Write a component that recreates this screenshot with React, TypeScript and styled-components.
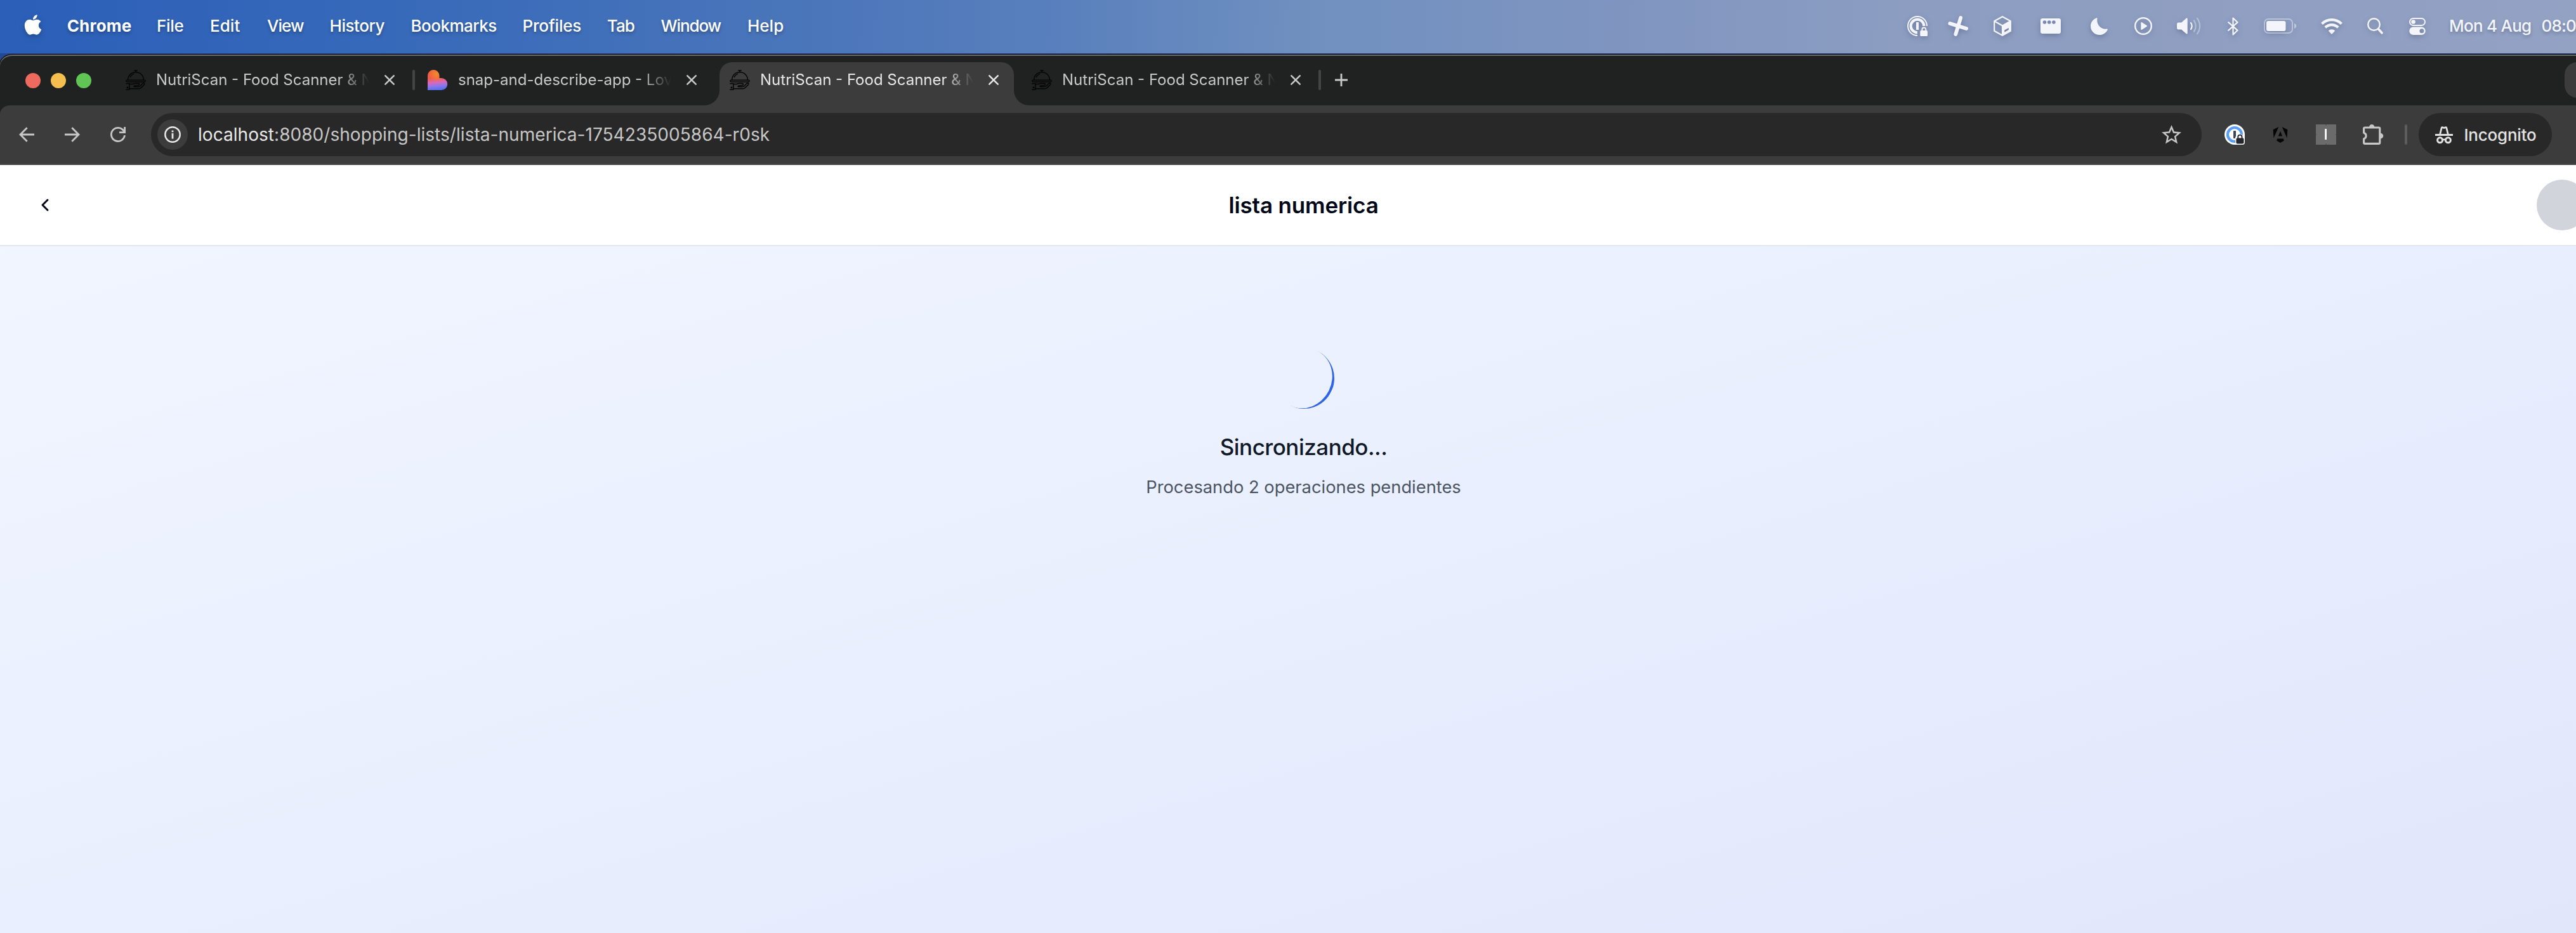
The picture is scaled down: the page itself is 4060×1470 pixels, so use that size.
import React from 'react';
import styled, { createGlobalStyle, css } from 'styled-components';
import { FaApple } from 'react-icons/fa';
import { MdStarBorder } from 'react-icons/md';
import { ChevronLeft } from 'lucide-react';

const GlobalStyle = createGlobalStyle`
  *, *::before, *::after { box-sizing: border-box; }
  body {
    margin: 0;
    font-family: Inter, 'Liberation Sans', sans-serif;
    overflow: hidden;
  }
  svg { display: block; flex: none; overflow: visible; }
`;

const Screen = styled.div`
  width: 4060px;
  height: 1470px;
  overflow: hidden;
  display: flex;
  flex-direction: column;
  background: #234a90;
`;

/* ---------- macOS menu bar ---------- */

const MenuBar = styled.header`
  flex: none;
  display: flex;
  align-items: center;
  height: 84px;
  padding-left: 34px;
  color: #fff;
  background: linear-gradient(
    92deg,
    #2b5fb8 0%,
    #386aba 16%,
    #4b76ba 32%,
    #5980bd 41%,
    #7090bf 51%,
    #7d94c0 61%,
    #8c9dc1 74%,
    #93a1c3 100%
  );
`;

const AppleMark = styled.div`
  width: 71.7px;
  padding-bottom: 6px;
  filter: drop-shadow(0 3px 4px rgba(0, 0, 0, 0.25));
`;

const MenuItem = styled.span<{ $width: number; $tracking?: number; $bold?: boolean }>`
  flex: none;
  width: ${(p) => p.$width}px;
  padding-bottom: 3px;
  font-size: 26px;
  line-height: 32px;
  font-weight: ${(p) => (p.$bold ? 700 : 500)};
  letter-spacing: ${(p) => p.$tracking ?? 0}px;
  white-space: nowrap;
  text-shadow: 0 3px 5px rgba(0, 0, 0, 0.28);
`;

const StatusArea = styled.div`
  flex: none;
  display: flex;
  align-items: center;
  width: 1054px;
  margin-left: auto;
  padding-bottom: 2px;
  color: #f3f5fa;
`;

const StatusIcon = styled.div<{ $gap: number }>`
  flex: none;
  margin-left: ${(p) => p.$gap}px;
  filter: drop-shadow(0 3px 4px rgba(30, 40, 80, 0.3));
`;

const Clock = styled.span<{ $gap: number; $tracking: number }>`
  flex: none;
  margin-left: ${(p) => p.$gap}px;
  padding-bottom: 1px;
  font-size: 26px;
  line-height: 32px;
  font-weight: 500;
  letter-spacing: ${(p) => p.$tracking}px;
  white-space: nowrap;
  text-shadow: 0 3px 5px rgba(30, 40, 80, 0.3);
`;

/* ---------- Browser window ---------- */

const BrowserWindow = styled.div`
  flex: 1;
  display: flex;
  flex-direction: column;
  margin-top: 2px;
  border-top-left-radius: 20px 16px;
  background: #202221;
  box-shadow: inset 0 2px 0 #696c6a, 0 0 0 1px #000;
`;

const TabStrip = styled.div`
  flex: none;
  display: flex;
  align-items: flex-start;
  height: 80px;
  padding: 12px 0 0 40px;
`;

const TrafficLights = styled.div`
  flex: none;
  display: flex;
  gap: 16px;
  width: 142px;
  padding-top: 17px;
`;

const Light = styled.i<{ $color: string }>`
  width: 24px;
  height: 24px;
  border-radius: 50%;
  background: ${(p) => p.$color};
`;

const activeTab = css`
  color: #e6e6e6;
  background: #3c3c3c;
  border-radius: 20px 20px 0 0;

  &::before,
  &::after {
    content: '';
    position: absolute;
    bottom: 0;
    width: 24px;
    height: 24px;
  }
  &::before {
    right: 100%;
    background: radial-gradient(circle at 0 0, transparent 23.5px, #3c3c3c 24.5px);
  }
  &::after {
    left: 100%;
    background: radial-gradient(circle at 100% 0, transparent 23.5px, #3c3c3c 24.5px);
  }
`;

const Tab = styled.div<{ $active?: boolean }>`
  position: relative;
  flex: none;
  display: flex;
  align-items: center;
  width: 464px;
  height: 68px;
  padding: 0 24px 12px 16px;
  color: #c7c8c7;
  ${(p) => p.$active && activeTab}
`;

const Favicon = styled.div`
  width: 32px;
  height: 32px;
  margin-right: 16px;
`;

const TabTitle = styled.span`
  width: 336px;
  overflow: hidden;
  padding-bottom: 1px;
  font-size: 24px;
  line-height: 32px;
  white-space: nowrap;
  mask-image: linear-gradient(90deg, #000 288px, transparent 336px);
`;

const TabClose = styled.div`
  margin-left: auto;
`;

const TabDivider = styled.i<{ $visible?: boolean }>`
  flex: none;
  width: 4px;
  height: 32px;
  margin: 12px 4px;
  border-radius: 2px;
  background: ${(p) => (p.$visible ? '#444645' : 'transparent')};
`;

const NewTab = styled.div`
  margin: 18px auto 0 18px;
  color: #c7c8c7;
`;

const TabSearch = styled.div`
  flex: none;
  width: 56px;
  height: 56px;
  margin-right: -38px;
  border-radius: 20px;
  background: #3c3c3c;
`;

const Toolbar = styled.div`
  flex: none;
  display: flex;
  align-items: center;
  height: 94px;
  padding: 0 38px 0 18px;
  border-bottom: 2px solid #4a4748;
  border-top-left-radius: 16px 14px;
  background: #3c3c3c;
  color: #c7c7c7;
`;

const NavButtons = styled.div`
  display: flex;
  gap: 24px;
  margin-right: 28px;
`;

const ToolButton = styled.div`
  display: flex;
  align-items: center;
  justify-content: center;
  width: 48px;
  height: 48px;
`;

const AddressBar = styled.div`
  flex: none;
  display: flex;
  align-items: center;
  width: 3232px;
  height: 68px;
  padding: 0 29px 0 10px;
  border-radius: 34px;
  background: #282828;
`;

const SiteInfo = styled.div`
  display: flex;
  align-items: center;
  justify-content: center;
  width: 48px;
  height: 48px;
  margin-right: 16px;
  border-radius: 50%;
  background: #3c3c3c;
  color: #e8e8e8;
`;

const Url = styled.span`
  flex: 1;
  font-size: 28px;
  line-height: 36px;
  letter-spacing: 0.045px;
  color: #c7c7c7;
`;

const Host = styled.span`
  color: #e8e8e8;
`;

const Extensions = styled.div`
  display: flex;
  gap: 24px;
  margin-left: 28px;
`;

const ToolDivider = styled.i`
  width: 4px;
  height: 32px;
  margin: 0 18px 0 28px;
  border-radius: 2px;
  background: #5c5c5c;
`;

const IncognitoChip = styled.div`
  flex: none;
  display: flex;
  align-items: center;
  gap: 17.5px;
  width: 210px;
  height: 68px;
  padding-left: 26px;
  border-radius: 34px;
  background: #282828;
  color: #e3e3e3;
  font-size: 26px;
  font-weight: 500;
  letter-spacing: -0.22px;
`;

/* ---------- Page ---------- */

const Page = styled.div`
  flex: 1;
  display: flex;
  flex-direction: column;
  width: 4109px;
  background: linear-gradient(to bottom right, #f2f6ff 0%, #e9effe 50%, #e1e6fb 100%);
`;

const PageHeader = styled.div`
  flex: none;
  display: grid;
  grid-template-columns: 80px 1fr 80px;
  align-items: center;
  height: 128px;
  padding: 0 31px;
  background: #fff;
  border-bottom: 2px solid #e2e6f0;
`;

const BackButton = styled.div`
  display: flex;
  align-items: center;
  justify-content: center;
  color: #020817;
`;

const PageTitle = styled.h1`
  margin: 0;
  font-size: 35px;
  line-height: 48px;
  font-weight: 600;
  letter-spacing: -0.15px;
  text-align: center;
  color: #020817;
`;

const Avatar = styled.div`
  width: 80px;
  height: 80px;
  border-radius: 50%;
  background: #d1d5db;
`;

const SyncPanel = styled.main`
  display: flex;
  flex-direction: column;
  align-items: center;
  padding-top: 160px;
`;

const Spinner = styled.div`
  width: 96px;
  height: 96px;
  border-radius: 50%;
  border-bottom: 4px solid #2f63e8;
  transform: rotate(-64deg);
`;

const SyncTitle = styled.h2`
  margin: 32px 0 16px;
  font-size: 35px;
  line-height: 56px;
  font-weight: 500;
  letter-spacing: -0.5px;
  color: #111827;
`;

const SyncText = styled.p`
  margin: 0;
  font-size: 27.3px;
  line-height: 40px;
  color: #4b5563;
`;

/* ---------- Icons ---------- */

const ClocheIcon = () => (
  <svg width="32" height="32" viewBox="0 0 32 32" fill="none" stroke="#050505" strokeWidth="1.5" strokeLinecap="round" strokeLinejoin="round">
    <path d="M13.8 1h4.4M16 1v2.6" />
    <path d="M3.6 16.2C3.6 9 9 3.8 16 3.8S28.4 9 28.4 16.2" />
    <path d="M7.2 11.4c1.2-2.3 3-4 5.400-5" />
    <rect x="0.9" y="16.2" width="30.2" height="2.8" rx="1.4" />
    <path d="M.8 21.8h5v9.4H.8" />
    <path d="M5.8 22.6h4.4c1.800 0 2.600-1.200 4.400-1.200h5.200c2.200 0 2.200 3-.2 3.200l-4.600.4c-1.600.2-2.200.8-1.600 1.300.5.4 1.300.4 2.400.4h4.200c1.400 0 2.400-.6 3.400-1.500l3.400-3.600c1.200-1.200 3.400-.6 3 .8-.2.6-.6 1-1.200 1.700l-4.200 4.200c-1 1-2 1.500-3.400 1.500H5.800" />
    <circle cx="3" cy="28" r=".7" />
  </svg>
);

const HeartIcon = () => (
  <svg width="31" height="32" viewBox="0 0 31 32">
    <defs>
      <linearGradient id="heartBase" x1="0.45" y1="0" x2="0.55" y2="1">
        <stop offset="0" stopColor="#f2643c" />
        <stop offset=".38" stopColor="#f05a46" />
        <stop offset=".6" stopColor="#dd68b4" />
        <stop offset=".8" stopColor="#8a76ee" />
        <stop offset="1" stopColor="#4f6fe6" />
      </linearGradient>
      <radialGradient id="heartGlow" cx=".45" cy=".22" r=".38">
        <stop offset="0" stopColor="#f08a2c" />
        <stop offset="1" stopColor="#f08a2c" stopOpacity="0" />
      </radialGradient>
    </defs>
    <path fill="url(#heartBase)" d="M0 9.200a9.200 9.200 0 0 1 18.400 0v3.800h3.300a9.500 9.500 0 0 1 0 19H0z" />
    <path fill="url(#heartGlow)" d="M0 9.200a9.200 9.200 0 0 1 18.400 0v3.800h3.300a9.500 9.500 0 0 1 0 19H0z" />
  </svg>
);

const CloseIcon = () => (
  <svg width="16" height="16" viewBox="0 0 16 16" stroke="currentColor" strokeWidth="2.6" strokeLinecap="round">
    <path d="M1.3 1.3l13.4 13.4M14.7 1.3L1.3 14.7" />
  </svg>
);

const PlusIcon = () => (
  <svg width="20" height="20" viewBox="0 0 20 20" stroke="currentColor" strokeWidth="2.8">
    <path d="M10 0v20M0 10h20" />
  </svg>
);

const ArrowIcon = ({ flip }: { flip?: boolean }) => (
  <svg width="24" height="24" viewBox="0 0 24 24" fill="none" stroke="currentColor" strokeWidth="2.8">
    <g transform={flip ? 'matrix(-1 0 0 1 24 0)' : undefined}>
      <path d="M12.7 1.3L2 12l10.7 10.7M2.5 12H24" />
    </g>
  </svg>
);

const ReloadIcon = () => (
  <svg width="24" height="24" viewBox="0 0 24 24" fill="none" stroke="currentColor" strokeWidth="2.8">
    <path d="M22.5 13.2A10.6 10.6 0 1 1 20.8 6L22 8.2" />
    <path d="M22.6 0v8.6H14" />
  </svg>
);

const InfoIcon = () => (
  <svg width="26" height="26" viewBox="0 0 26 26" fill="none" stroke="currentColor">
    <circle cx="13" cy="13" r="11.7" strokeWidth="2.5" />
    <path d="M13 11v8.6" strokeWidth="2.8" />
    <path d="M13 6.5v2.8" strokeWidth="2.8" />
  </svg>
);

const PasswordExtensionIcon = () => (
  <svg width="32" height="32" viewBox="0 0 32 32">
    <circle cx="16" cy="16" r="16" fill="#fff" />
    <rect x="16" y="15.5" width="16" height="16.5" rx="4" fill="#fff" />
    <circle cx="16" cy="16" r="11" fill="none" stroke="#5a9df8" strokeWidth="4.2" />
    <rect x="14" y="10" width="4" height="12" rx=".6" fill="#3c4652" />
    <path d="M17 20l4-4.5h6.5L31 20v9l-2.5 3H17z" fill="#fff" />
    <rect x="18.4" y="21.5" width="12" height="9" rx="2" fill="#23262c" />
    <path d="M21.3 22v-2.3a3.1 3.1 0 0 1 6.2 0V22" fill="none" stroke="#23262c" strokeWidth="1.9" />
  </svg>
);

const AngularIcon = () => (
  <svg width="24" height="25" viewBox="0 0 24 24" preserveAspectRatio="none" fill="#050505">
    <path d="M16.712 17.711H7.288l-1.204 2.916L12 24l5.916-3.373-1.204-2.916ZM14.692 0l7.832 16.855.814-12.856L14.692 0ZM9.308 0 .662 3.999l.814 12.856L9.308 0Zm-.405 13.93h6.198L12 6.396 8.903 13.93Z" />
  </svg>
);

const BarExtensionIcon = () => (
  <svg width="32" height="32" viewBox="0 0 32 32">
    <rect width="32" height="32" rx="1" fill="#6b6b6b" />
    <path d="M16 0v2M16 30v2M0 16h1.5M30.5 16H32" stroke="#505050" strokeWidth="1.2" />
    <rect x="14.2" y="7" width="2.8" height="17" fill="#fff" />
  </svg>
);

const PuzzleIcon = () => (
  <svg width="29" height="32" viewBox="0 0 29 32" fill="none" stroke="currentColor" strokeWidth="3.1" strokeLinejoin="round">
    <path d="M3.8 5H25.2a1.6 1.6 0 0 1 1.6 1.6V28.8a1.6 1.6 0 0 1-1.6 1.6H3.2A1.6 1.6 0 0 1 1.6 28.8V22.8C6.3 21.4 6.3 14.6 1.6 13.2V6.600A1.6 1.6 0 0 1 3.2 5Z" />
    <path d="M10 4.5a4.2 4.5 0 0 1 8.4 0zM27.5 13.7a4.8 4.4 0 0 1 0 8.8z" fill="currentColor" stroke="none" />
  </svg>
);

const IncognitoIcon = () => (
  <svg width="28" height="27" viewBox="0 0 28 27" fill="none" stroke="currentColor">
    <path d="M0 13.5h28" strokeWidth="3" />
    <path d="M7.6 13L10 3c.3-1.200 1-1.700 2-1.300l2 .8 2-.8c1-.4 1.700.1 2 1.300l2.4 10" strokeWidth="2.8" />
    <circle cx="7.6" cy="21.8" r="4" strokeWidth="3" />
    <circle cx="20.4" cy="21.8" r="4" strokeWidth="3" />
    <path d="M11.5 21.5c1.500-1 3.500-1 5 0" strokeWidth="2.4" />
  </svg>
);

const KeyRingIcon = () => (
  <svg width="32" height="32" viewBox="0 0 32 32" fill="none" stroke="currentColor">
    <path d="M31 16A15 15 0 1 0 16 31" strokeWidth="2" />
    <path d="M26.4 16A10.4 10.4 0 1 0 16 26.4" strokeWidth="4.2" />
    <rect x="14" y="10" width="4" height="12" fill="currentColor" stroke="none" />
    <rect x="20.3" y="23" width="11.7" height="9" rx="1.5" fill="currentColor" stroke="none" />
    <path d="M23.3 24v-2.5a3 3 0 0 1 6 0V24" strokeWidth="1.9" />
  </svg>
);

const PinwheelIcon = () => (
  <svg width="32.5" height="32" viewBox="0 0 32 32" fill="none" stroke="currentColor" strokeWidth="5.8" strokeLinecap="round">
    <g transform="rotate(17 16 16)">
      <path d="M16 2.5v27M2.5 16h27" />
    </g>
    <circle cx="16" cy="16" r="2" strokeWidth="4" />
  </svg>
);

const CubeIcon = () => (
  <svg width="28" height="32" viewBox="0 0 28 32" fill="none" stroke="currentColor" strokeWidth="2.2" strokeLinejoin="round">
    <path d="M14 1.2L26.8 8.3v15.400L14 30.800 1.200 23.700V8.300zM1.200 8.300L14 15.500 26.800 8.300M14 15.500v15.300" />
    <path fill="currentColor" fillRule="evenodd" stroke="none" d="M14 15.500L27 8.300v15.700L14 31zM17.200 22.600v3.200l6.600-3.700v-3.200z" />
  </svg>
);

const PanelIcon = () => (
  <svg width="32" height="24" viewBox="0 0 32 24">
    <rect width="32" height="24" rx="3.2" fill="currentColor" />
    <g fill="#7788b2">
      <circle cx="6.5" cy="6" r="2.8" />
      <circle cx="13.7" cy="6" r="2.8" />
      <circle cx="20.9" cy="6" r="2.8" />
    </g>
  </svg>
);

const MoonIcon = () => (
  <svg width="27" height="27" viewBox="0 0 27 27" fill="currentColor">
    <path d="M9.3.3c.9-.4 1.400.1 1.200.9C8.700 9.700 15.800 19 25.800 17.500c.9-.1 1.400.4 1 1.200C24.600 23.800 19.800 27 14 27 6.300 27 0 21 0 13.200 0 7.400 3.700 2.400 9.300.3z" />
  </svg>
);

const PlayIcon = () => (
  <svg width="28" height="28" viewBox="0 0 28 28" fill="none">
    <circle cx="14" cy="14" r="12.8" stroke="currentColor" strokeWidth="2.4" />
    <path d="M10.3 8.8v10.400c0 .7.600 1 1.200.7l8.200-5.200c.5-.3.500-1 0-1.400l-8.200-5.200c-.6-.4-1.200 0-1.200.7z" fill="currentColor" />
  </svg>
);

const SpeakerIcon = () => (
  <svg width="38" height="28" viewBox="0 0 38 28" fill="none" stroke="currentColor" strokeWidth="2.2" strokeLinecap="round">
    <path d="M2.5 8.5H7L14.500 2c1-.9 2.200-.5 2.200.8v22.400c0 1.300-1.200 1.700-2.200.8L7 19.500H2.500A2.500 2.500 0 0 1 0 17v-6a2.500 2.500 0 0 1 2.500-2.500z" fill="currentColor" stroke="none" />
    <path d="M22 9c2 3 2 7 0 10" />
    <g opacity=".4">
      <path d="M27 5.500c3.600 5 3.600 12 0 17" />
      <path d="M32 1.800c5.400 7.400 5.400 17 0 24.400" />
    </g>
  </svg>
);

const BluetoothIcon = () => (
  <svg width="17" height="29" viewBox="0 0 17 29" fill="none" stroke="currentColor" strokeWidth="2.2" strokeLinecap="round" strokeLinejoin="round">
    <path d="M1.2 8.2L15.600 20.800 8.500 27.500V1.500L15.600 8.200 1.200 20.800" />
  </svg>
);

const BatteryIcon = () => (
  <svg width="51" height="24" viewBox="0 0 51 24">
    <rect x="1" y="1" width="44" height="22" rx="6" fill="none" stroke="currentColor" strokeWidth="2" opacity=".45" />
    <rect x="4" y="4" width="30.5" height="16" rx="3" fill="currentColor" />
    <path d="M48 8c2.200.6 3.200 2.200 3.200 4s-1 3.400-3.200 4z" fill="currentColor" opacity=".5" />
  </svg>
);

const WifiIcon = () => (
  <svg width="34" height="26" viewBox="0 0 34 26" fill="none" stroke="currentColor" strokeWidth="4.2">
    <path d="M1.5 9.5a22 22 0 0 1 31 0" />
    <path d="M6.8 15.3a14.600 14.600 0 0 1 20.400 0" />
    <path d="M17 26l5.300-5.500a7.600 7.600 0 0 0-10.600 0z" fill="currentColor" stroke="none" />
  </svg>
);

const SearchIcon = () => (
  <svg width="25" height="26" viewBox="0 0 25 26" fill="none" stroke="currentColor" strokeLinecap="round">
    <circle cx="10.5" cy="10.5" r="9.3" strokeWidth="2.4" />
    <path d="M17.6 17.8l5.400 6" strokeWidth="3.6" />
  </svg>
);

const ControlCenterIcon = () => (
  <svg width="26" height="27" viewBox="0 0 26 27">
    <rect x="1" y="1" width="24" height="11" rx="5.5" fill="none" stroke="currentColor" strokeWidth="2" />
    <circle cx="6.6" cy="6.5" r="3.3" fill="currentColor" />
    <path fillRule="evenodd" fill="currentColor" d="M6.5 14.500h13a6.200 6.200 0 0 1 0 12.500h-13a6.200 6.200 0 0 1 0-12.500zM20 17.300a3.500 3.500 0 1 0 0 7 3.500 3.500 0 0 0 0-7z" />
  </svg>
);

/* ---------- Data ---------- */

const menuItems = [
  { label: 'Chrome', width: 141.3, tracking: 0.2, bold: true },
  { label: 'File', width: 84.1, tracking: -0.3 },
  { label: 'Edit', width: 90 },
  { label: 'View', width: 98.4, tracking: -1 },
  { label: 'History', width: 128, tracking: -0.45 },
  { label: 'Bookmarks', width: 176, tracking: -0.5 },
  { label: 'Profiles', width: 133.4, tracking: -0.2 },
  { label: 'Tab', width: 84.6, tracking: -1 },
  { label: 'Window', width: 136.5, tracking: -1.1 },
  { label: 'Help', width: 60 },
];

const statusIcons = [
  { Icon: KeyRingIcon, gap: 0 },
  { Icon: PinwheelIcon, gap: 31.5 },
  { Icon: CubeIcon, gap: 40 },
  { Icon: PanelIcon, gap: 46 },
  { Icon: MoonIcon, gap: 47 },
  { Icon: PlayIcon, gap: 42 },
  { Icon: SpeakerIcon, gap: 39 },
  { Icon: BluetoothIcon, gap: 42 },
  { Icon: BatteryIcon, gap: 40 },
  { Icon: WifiIcon, gap: 38.5 },
  { Icon: SearchIcon, gap: 39.5 },
  { Icon: ControlCenterIcon, gap: 41 },
];

const tabs = [
  { title: 'NutriScan - Food Scanner & N', Icon: ClocheIcon, divider: true },
  { title: 'snap-and-describe-app - Lov', Icon: HeartIcon },
  { title: 'NutriScan - Food Scanner & N', Icon: ClocheIcon, active: true },
  { title: 'NutriScan - Food Scanner & N', Icon: ClocheIcon, divider: true },
];

const extensions = [PasswordExtensionIcon, AngularIcon, BarExtensionIcon, PuzzleIcon];

export default function App() {
  return (
    <>
      <GlobalStyle />
      <Screen>
        <MenuBar>
          <AppleMark>
            <FaApple size={36} />
          </AppleMark>
          {menuItems.map((m) => (
            <MenuItem key={m.label} $width={m.width} $tracking={m.tracking} $bold={m.bold}>
              {m.label}
            </MenuItem>
          ))}
          <StatusArea>
            {statusIcons.map(({ Icon, gap }, i) => (
              <StatusIcon key={i} $gap={gap}>
                <Icon />
              </StatusIcon>
            ))}
            <Clock $gap={37} $tracking={-0.75}>Mon 4 Aug</Clock>
            <Clock $gap={16} $tracking={-0.8}>08:0</Clock>
          </StatusArea>
        </MenuBar>

        <BrowserWindow>
          <TabStrip>
            <TrafficLights>
              <Light $color="#ed6a5f" />
              <Light $color="#f5bf4f" />
              <Light $color="#61c555" />
            </TrafficLights>
            {tabs.map((t, i) => (
              <React.Fragment key={i}>
                <Tab $active={t.active}>
                  <Favicon>
                    <t.Icon />
                  </Favicon>
                  <TabTitle>{t.title}</TabTitle>
                  <TabClose>
                    <CloseIcon />
                  </TabClose>
                </Tab>
                <TabDivider $visible={t.divider} />
              </React.Fragment>
            ))}
            <NewTab>
              <PlusIcon />
            </NewTab>
            <TabSearch />
          </TabStrip>

          <Toolbar>
            <NavButtons>
              <ToolButton>
                <ArrowIcon />
              </ToolButton>
              <ToolButton>
                <ArrowIcon flip />
              </ToolButton>
              <ToolButton>
                <ReloadIcon />
              </ToolButton>
            </NavButtons>
            <AddressBar>
              <SiteInfo>
                <InfoIcon />
              </SiteInfo>
              <Url>
                <Host>localhost</Host>:8080/shopping-lists/lista-numerica-1754235005864-r0sk
              </Url>
              <MdStarBorder size={37} />
            </AddressBar>
            <Extensions>
              {extensions.map((Icon, i) => (
                <ToolButton key={i}>
                  <Icon />
                </ToolButton>
              ))}
            </Extensions>
            <ToolDivider />
            <IncognitoChip>
              <IncognitoIcon />
              Incognito
            </IncognitoChip>
          </Toolbar>

          <Page>
            <PageHeader>
              <BackButton>
                <ChevronLeft size={32} strokeWidth={2.2} />
              </BackButton>
              <PageTitle>lista numerica</PageTitle>
              <Avatar />
            </PageHeader>
            <SyncPanel>
              <Spinner />
              <SyncTitle>Sincronizando...</SyncTitle>
              <SyncText>Procesando 2 operaciones pendientes</SyncText>
            </SyncPanel>
          </Page>
        </BrowserWindow>
      </Screen>
    </>
  );
}
